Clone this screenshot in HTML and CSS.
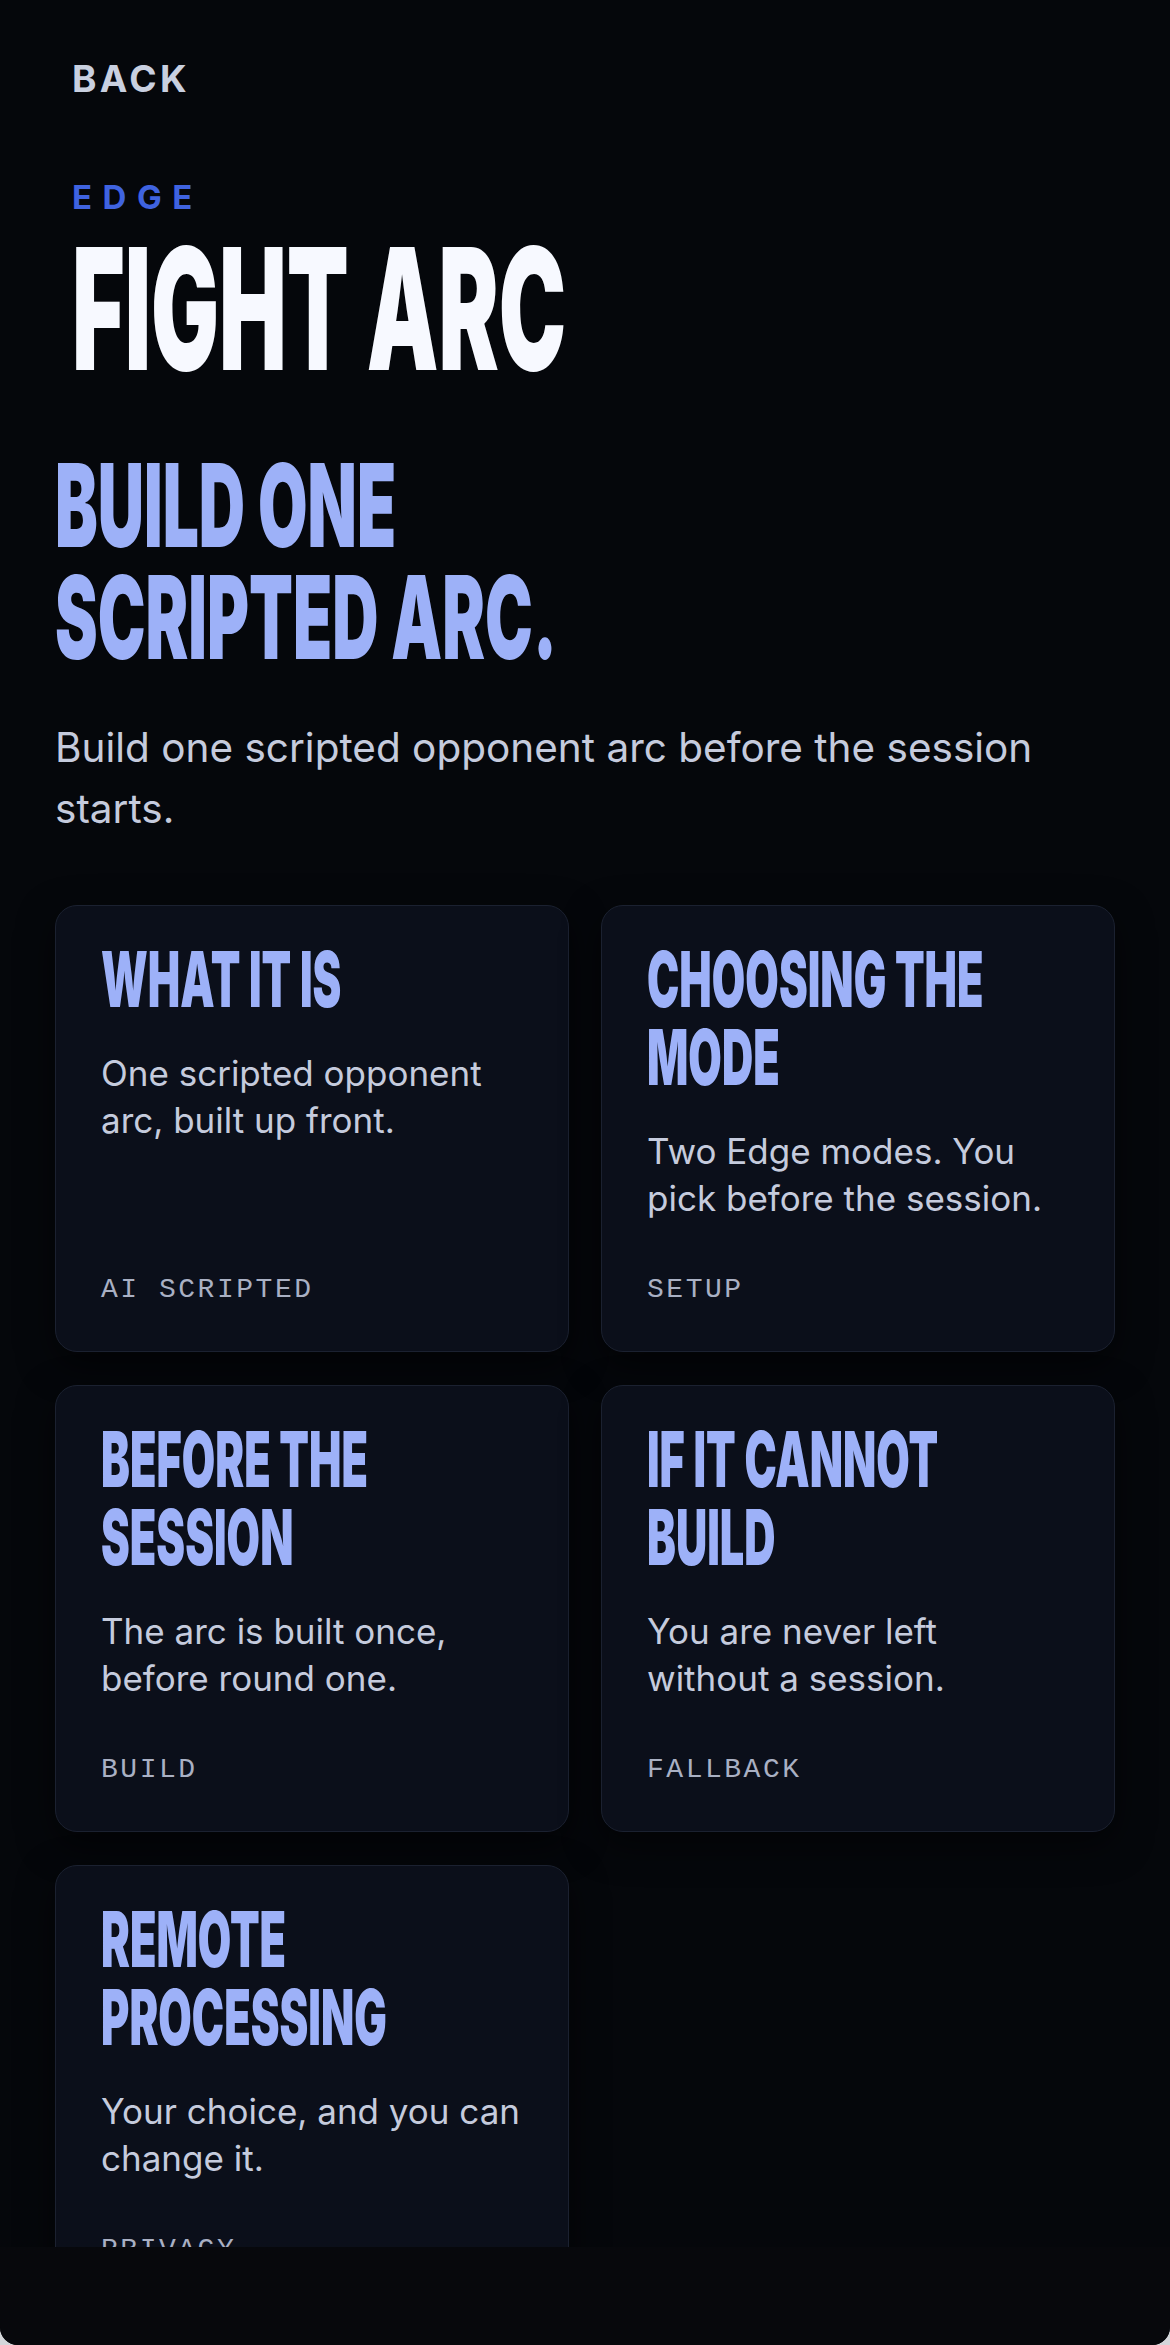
FILE: index.html
```html
<!DOCTYPE html>
<html lang="en">
<head>
<meta charset="utf-8">
<title>Fight Arc</title>
<link rel="stylesheet" href="styles.css">
</head>
<body>
<div class="app">
  <main class="screen">
    <header class="top">
      <a class="back" href="#">BACK</a>
      <div class="eyebrow">EDGE</div>
      <h1 class="title"><span class="squeeze sq-title">FIGHT ARC</span></h1>
    </header>

    <section class="intro">
      <h2 class="headline"><span class="squeeze sq-head">BUILD ONE<br>SCRIPTED ARC.</span></h2>
      <p class="lede">Build one scripted opponent arc before the session starts.</p>
    </section>

    <section class="cards">
      <article class="card">
        <h3 class="card-title"><span class="squeeze sq-card">WHAT IT IS</span></h3>
        <p class="card-text">One scripted opponent arc, built up front.</p>
        <span class="tag">AI SCRIPTED</span>
      </article>
      <article class="card">
        <h3 class="card-title"><span class="squeeze sq-card">CHOOSING THE<br>MODE</span></h3>
        <p class="card-text">Two Edge modes. You pick before the session.</p>
        <span class="tag">SETUP</span>
      </article>
      <article class="card">
        <h3 class="card-title"><span class="squeeze sq-card">BEFORE THE<br>SESSION</span></h3>
        <p class="card-text">The arc is built once, before round one.</p>
        <span class="tag">BUILD</span>
      </article>
      <article class="card">
        <h3 class="card-title"><span class="squeeze sq-card">IF IT CANNOT<br>BUILD</span></h3>
        <p class="card-text">You are never left without a session.</p>
        <span class="tag">FALLBACK</span>
      </article>
      <article class="card">
        <h3 class="card-title"><span class="squeeze sq-card">REMOTE<br>PROCESSING</span></h3>
        <p class="card-text">Your choice, and you can change it.</p>
        <span class="tag">PRIVACY</span>
      </article>
    </section>
  </main>
  <div class="home-area"></div>
</div>
</body>
</html>
```

FILE: styles.css
```css
* { box-sizing: border-box; }

html, body {
  margin: 0;
  padding: 0;
  background: #d4d6da;
}

.app {
  width: 1170px;
  height: 2345px;
  background: #07080c;
  border-radius: 0 0 18px 18px;
  overflow: hidden;
  display: flex;
  flex-direction: column;
}

.screen {
  height: 2247px;
  flex: none;
  overflow: hidden;
  background: #05070b;
  padding: 57px 55px 0;
  font-family: "Inter", "Noto Sans", sans-serif;
}

.home-area {
  flex: 1;
  background: #07080c;
}

/* header */
.top {
  padding-left: 17px;
  display: flex;
  flex-direction: column;
  align-items: flex-start;
}

.back {
  font-size: 37px;
  line-height: 44px;
  font-weight: 700;
  letter-spacing: 0.09em;
  color: #c9d0e0;
  text-decoration: none;
}

.eyebrow {
  margin-top: 76px;
  font-size: 33px;
  line-height: 40px;
  font-weight: 700;
  letter-spacing: 0.32em;
  color: #3f63e0;
}

.title {
  margin: 7px 0 0;
  font-size: 169px;
  line-height: 169px;
  font-weight: 900;
  color: #f7f9ff;
}

.squeeze {
  display: inline-block;
  white-space: nowrap;
  transform-origin: left center;
}
.sq-title { transform: scaleX(0.534); }
.sq-head { transform: scaleX(0.557); }
.sq-card { transform: scaleX(0.562); }

/* intro */
.intro {
  margin-top: 57px;
}

.headline {
  margin: 0;
  font-size: 115px;
  line-height: 112px;
  font-weight: 900;
  color: #9db1f8;
}

.lede {
  margin: 43px 0 0;
  font-size: 40.5px;
  line-height: 61px;
  color: #c5cbdd;
  max-width: 1060px;
}

/* cards */
.cards {
  margin-top: 66px;
  display: grid;
  grid-template-columns: repeat(2, minmax(0, 1fr));
  column-gap: 32px;
  row-gap: 33px;
}

.card {
  min-width: 0;
  overflow: hidden;
  display: flex;
  flex-direction: column;
  align-items: flex-start;
  background: #0b0f1a;
  border: 1px solid #1b2130;
  border-radius: 22px;
  padding: 34px 47px 43px 45px;
  box-shadow: 0 12px 36px rgba(0, 0, 0, 0.55);
}

.card-title {
  margin: 0;
  max-width: 100%;
  font-size: 77px;
  line-height: 78px;
  font-weight: 900;
  color: #9db1f8;
}

.card-text {
  margin: 32px 0 0;
  font-size: 35px;
  line-height: 47px;
  color: #c5cbdd;
}

.tag {
  margin-top: auto;
  padding-top: 50px;
  font-family: "Liberation Mono", "DejaVu Sans Mono", monospace;
  font-size: 28px;
  line-height: 36px;
  letter-spacing: 0.09em;
  color: #a9b0c3;
}
```
